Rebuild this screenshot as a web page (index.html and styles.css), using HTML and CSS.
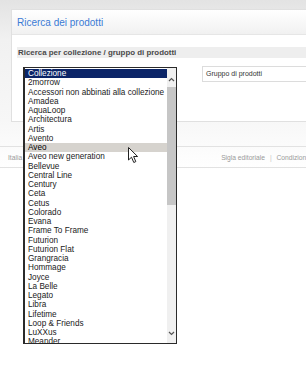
FILE: index.html
```html
<html>
    <head>
        <title>Ricerca dei prodotti</title>
        <link rel="stylesheet" href="styles.css">
    </head>
    <body>
        <div class="panel">
            <div class="panel-head">
                <h1 class="title">Ricerca dei prodotti</h1>
            </div>
            <div class="panel-body">
                <div class="section-bar">Ricerca per collezione / gruppo di prodotti</div>
                <div class="filters">
                    <div class="combo">
                        <div class="listbox">
                            <ul class="options">
                                <li class="selected">Collezione</li>
                                <li>2morrow</li>
                                <li>Accessori non abbinati alla collezione</li>
                                <li>Amadea</li>
                                <li>AquaLoop</li>
                                <li>Architectura</li>
                                <li>Artis</li>
                                <li>Avento</li>
                                <li class="hover">Aveo</li>
                                <li>Aveo new generation</li>
                                <li>Bellevue</li>
                                <li>Central Line</li>
                                <li>Century</li>
                                <li>Ceta</li>
                                <li>Cetus</li>
                                <li>Colorado</li>
                                <li>Evana</li>
                                <li>Frame To Frame</li>
                                <li>Futurion</li>
                                <li>Futurion Flat</li>
                                <li>Grangracia</li>
                                <li>Hommage</li>
                                <li>Joyce</li>
                                <li>La Belle</li>
                                <li>Legato</li>
                                <li>Libra</li>
                                <li>Lifetime</li>
                                <li>Loop &amp; Friends</li>
                                <li>LuXXus</li>
                                <li>Meander</li>
                            </ul>
                            <div class="scrollbar">
                                <div class="sb-btn sb-up">
                                    <svg width="7" height="5" viewBox="0 0 7 5"><polyline points="1,4 3.5,1.5 6,4" fill="none" stroke="#555" stroke-width="1.2"/></svg>
                                </div>
                                <div class="sb-thumb"></div>
                                <div class="sb-track"></div>
                                <div class="sb-btn sb-down">
                                    <svg width="7" height="5" viewBox="0 0 7 5"><polyline points="1,1 3.5,3.5 6,1" fill="none" stroke="#555" stroke-width="1.2"/></svg>
                                </div>
                            </div>
                        </div>
                        <svg class="cursor" width="11" height="17" viewBox="0 0 11 17">
                            <path d="M0.5,0.5 L0.5,13 L3.5,10.2 L5.8,15.5 L7.8,14.6 L5.6,9.5 L9.6,9.5 Z" fill="#fff" stroke="#222" stroke-width="1"/>
                        </svg>
                    </div>
                    <div class="field">Gruppo di prodotti</div>
                </div>
            </div>
        </div>
        <div class="footer">
            <span class="country">Italia</span>
            <span class="links">Sigla editoriale <span class="sep">|</span> Condizioni</span>
        </div>
    </body>
</html>
```

FILE: styles.css
```css
body {
    margin: 0;
    overflow: hidden;
    font-family: "Liberation Sans", Arial, sans-serif;
    background: linear-gradient(#e3e3e3 0px, #f1f1f1 40px, #f7f7f7 121px, #fbfbfb 145px, #ffffff 170px);
    height: 366px;
}
.panel {
    margin: 9px 0 0 11px;
    width: 400px;
    height: 113px;
    box-sizing: border-box;
    background: #fff;
    border: 1px solid #e0e0e0;
    border-right: none;
}
.panel-head {
    height: 25px;
    box-sizing: border-box;
    background: linear-gradient(#ffffff, #f1f1f1);
    border-bottom: 1px solid #e6e6e6;
    padding-left: 5px;
    display: flex;
    align-items: center;
}
.title {
    margin: 0;
    font-size: 10px;
    font-weight: normal;
    color: #3a7bd5;
}
.panel-body {
    padding: 12px 0 0 5px;
}
.section-bar {
    height: 11px;
    line-height: 11px;
    background: #eeeeee;
    padding-left: 1px;
    font-size: 7.9px;
    font-weight: bold;
    color: #4a4a4a;
}
.filters {
    display: flex;
    margin-top: 8px;
    padding-left: 6px;
    gap: 25px;
}
.combo {
    position: relative;
    width: 154px;
    height: 16px;
}
.listbox {
    position: absolute;
    top: 1px;
    left: 0;
    width: 154px;
    height: 277px;
    box-sizing: border-box;
    border: 1px solid #2a2a2a;
    border-left-width: 2px;
    background: #fff;
    display: flex;
    z-index: 2;
}
.options {
    flex: 1;
    margin: 0;
    padding: 1px 0 0 0;
    list-style: none;
    overflow: hidden;
}
.options li {
    height: 9.25px;
    line-height: 9.25px;
    padding-left: 3px;
    font-size: 8.2px;
    color: #1a1a1a;
    white-space: nowrap;
}
.options li.selected {
    background: #0b2568;
    color: #fff;
}
.options li.hover {
    background: #d6d3ce;
    color: #000;
}
.scrollbar {
    width: 9px;
    background: #f0f0f0;
    display: flex;
    flex-direction: column;
}
.sb-btn {
    display: flex;
    justify-content: center;
    align-items: center;
}
.sb-up {
    height: 19px;
    padding-top: 3px;
    box-sizing: border-box;
}
.sb-thumb {
    height: 118px;
    background: #c6c6c6;
}
.sb-track {
    flex: 1;
}
.sb-down {
    height: 16px;
    padding-bottom: 4px;
    box-sizing: border-box;
}
.cursor {
    position: absolute;
    left: 105px;
    top: 81px;
    z-index: 3;
}
.field {
    width: 200px;
    height: 16px;
    box-sizing: border-box;
    border: 1px solid #dcdcdc;
    padding-left: 3px;
    font-size: 7px;
    line-height: 14px;
    color: #333;
}
.footer {
    margin-top: 24px;
    height: 22px;
    box-sizing: border-box;
    border-top: 1px solid #e2e2e2;
    border-bottom: 1px solid #e2e2e2;
    display: flex;
    align-items: center;
    padding-left: 8px;
    font-size: 6.7px;
    color: #9a9a9a;
    white-space: nowrap;
}
.links {
    margin-left: 199px;
}
.sep {
    color: #c8c8c8;
    margin: 0 3px;
}
```
